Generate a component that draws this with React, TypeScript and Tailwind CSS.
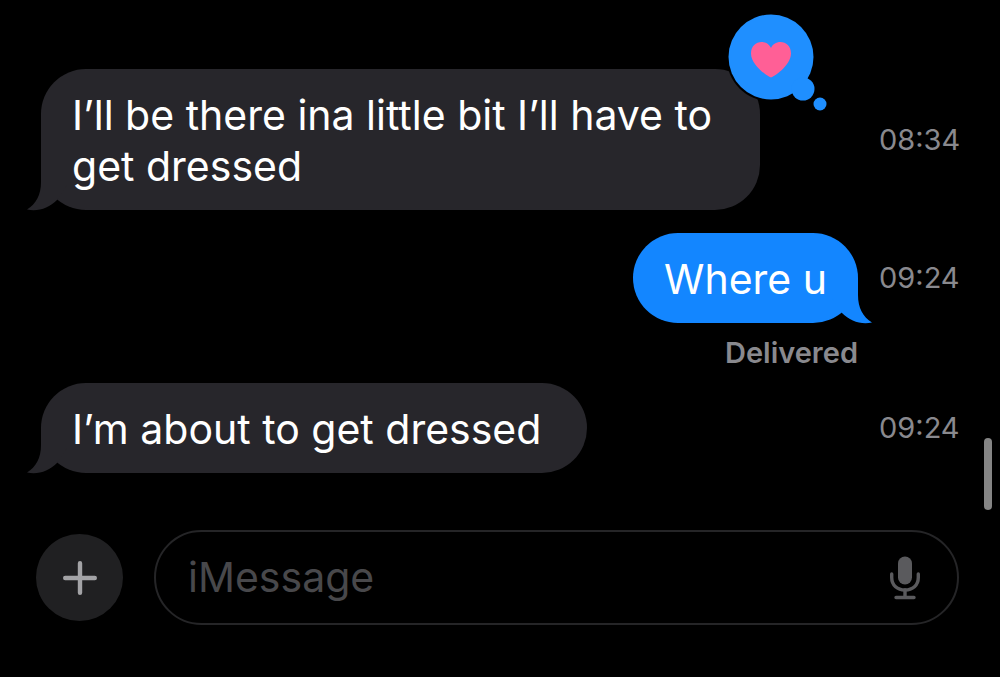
import { useState } from "react";

interface Message {
  id: number;
  text: string;
  time: string;
  sent: boolean;
  loved?: boolean;
  status?: string;
}

const messages: Message[] = [
  {
    id: 1,
    text: "I’ll be there ina little bit I’ll have to get dressed",
    time: "08:34",
    sent: false,
    loved: true,
  },
  { id: 2, text: "Where u", time: "09:24", sent: true, status: "Delivered" },
  { id: 3, text: "I’m about to get dressed", time: "09:24", sent: false },
];

function Tail({ sent }: { sent: boolean }) {
  return (
    <svg
      viewBox="0 0 40 46"
      aria-hidden="true"
      className={`absolute bottom-[-1px] h-[46px] w-10 ${
        sent ? "right-[-14px] -scale-x-100 text-[#1386ff]" : "left-[-14px] text-[#27262b]"
      }`}
    >
      <path
        d="M14 0 V17 C14 30 9 39 0 44.500 C11 47 22 43 30 35 L40 20 V0 Z"
        fill="currentColor"
      />
    </svg>
  );
}

function HeartReaction() {
  return (
    <svg
      viewBox="0 0 104 104"
      role="img"
      aria-label="Loved"
      className="absolute -top-[59px] -right-[70px] size-[104px]"
    >
      <circle cx="45" cy="47" r="44.5" fill="#000" />
      <g fill="#1f8fff">
        <circle cx="45" cy="47" r="42.5" />
        <circle cx="77" cy="79" r="11.5" />
        <circle cx="94" cy="94" r="6.5" />
      </g>
      <path
        d="M45 67.500 C43.500 67.500 25 56 25 43.500 C25 36 30 32 35.500 32 C40 32 43.500 34.500 45 38 C46.500 34.500 50 32 54.500 32 C60 32 65 36 65 43.500 C65 56 46.500 67.500 45 67.500 Z"
        fill="#ff5f96"
      />
    </svg>
  );
}

function MessageRow({ message }: { message: Message }) {
  const { text, time, sent, loved, status } = message;
  return (
    <li>
      <div className="flex items-center gap-[21px]">
        <div className={`flex min-w-0 flex-1 ${sent ? "justify-end" : "justify-start"}`}>
          <div
            className={`relative max-w-[719px] rounded-[45px] pt-[21px] pb-[18px] ${
              sent ? "bg-[#1386ff] px-[31px]" : "bg-[#27262b] pr-[46px] pl-[31px]"
            }`}
          >
            <Tail sent={sent} />
            <p className="relative text-[41px] leading-[51px] text-white">{text}</p>
            {loved && <HeartReaction />}
          </div>
        </div>
        <time className="w-[79px] shrink-0 text-right text-[29px] leading-9 whitespace-nowrap text-[#89898e]">
          {time}
        </time>
      </div>
      {status && (
        <p className="mt-3 mr-[100px] text-right text-[29px] leading-9 font-semibold text-[#89898e]">
          {status}
        </p>
      )}
    </li>
  );
}

function MicIcon() {
  return (
    <svg viewBox="0 0 30 44" aria-hidden="true" className="h-11 w-[30px]">
      <rect x="8" y="0.500" width="14" height="28" rx="7" fill="#5a5a5d" />
      <g fill="none" stroke="#5a5a5d" strokeWidth="3.400" strokeLinecap="round">
        <path d="M1.700 18 V21.500 C1.700 29.500 7.500 34 15 34 C22.500 34 28.300 29.500 28.300 21.500 V18" />
        <path d="M15 34 V41.500 M6 41.500 H24" />
      </g>
    </svg>
  );
}

export default function App() {
  const [draft, setDraft] = useState("");

  return (
    <main className="relative min-h-screen bg-black pt-[69px] pb-[52px] font-['Inter','Liberation_Sans',sans-serif]">
      <ol className="flex flex-col pr-[42px] pl-[41px] [&>li:nth-child(2)]:mt-[23px] [&>li:nth-child(3)]:mt-3">
        {messages.map((message) => (
          <MessageRow key={message.id} message={message} />
        ))}
      </ol>

      <form
        className="mt-[57px] flex items-center gap-[31px] pr-[41px] pl-9"
        onSubmit={(event) => event.preventDefault()}
      >
        <button
          type="button"
          aria-label="Add attachment"
          className="flex size-[87px] shrink-0 items-center justify-center rounded-full bg-[#202022]"
        >
          <svg viewBox="0 0 34 34" aria-hidden="true" className="size-[34px]">
            <path
              d="M17 2.200 V31.800 M2.200 17 H31.800"
              stroke="#a3a3a6"
              strokeWidth="4.400"
              strokeLinecap="round"
            />
          </svg>
        </button>
        <div className="flex h-[95px] min-w-0 flex-1 items-center rounded-full border-2 border-[#252527] pr-[37px] pl-8">
          <input
            type="text"
            aria-label="iMessage"
            placeholder="iMessage"
            value={draft}
            onChange={(event) => setDraft(event.target.value)}
            className="min-w-0 flex-1 bg-transparent text-[41px] leading-[51px] text-white outline-none placeholder:text-[#48484b]"
          />
          <button type="button" aria-label="Dictate" className="shrink-0">
            <MicIcon />
          </button>
        </div>
      </form>

      <div className="absolute top-[438px] right-2 h-[72px] w-2 rounded-full bg-[#858585]" />
    </main>
  );
}
